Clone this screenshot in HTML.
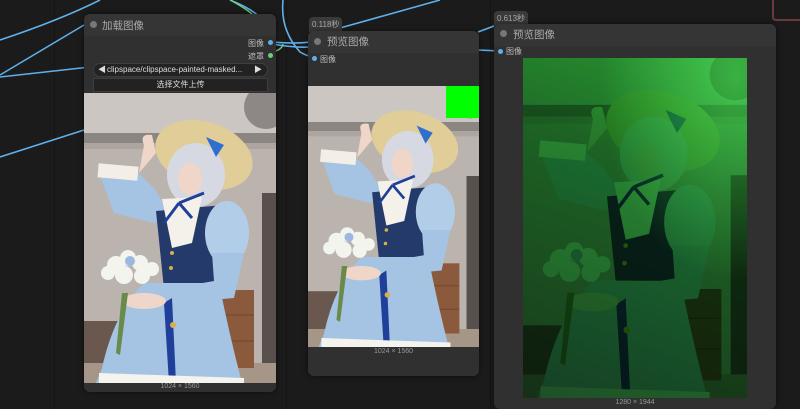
<!DOCTYPE html>
<html><head><meta charset="utf-8">
<style>
html,body{margin:0;padding:0;}
body{width:800px;height:409px;overflow:hidden;background:#1b1b1b;position:relative;font-family:"Liberation Sans","Noto Sans CJK SC",sans-serif;}
.grid{position:absolute;top:0;bottom:0;width:1px;background:#141414;}
.node{position:absolute;background:#303030;border-radius:6px;box-shadow:0 0 6px rgba(0,0,0,.5);}
.title{position:absolute;left:0;right:0;top:0;height:22px;background:#353535;border-radius:6px 6px 0 0;}
.tdot{position:absolute;width:7px;height:7px;border-radius:50%;background:#777;}
.ttext{position:absolute;color:#aaa;font-size:10.5px;}
.lbl{position:absolute;color:#bbb;font-size:8px;}
.dot{position:absolute;width:5px;height:5px;border-radius:50%;}
.badge{position:absolute;background:#3a3a3a;color:#aaa;font-size:8px;padding:2px 3px;border-radius:4px 4px 0 0;}
.cap{position:absolute;color:#999;font-size:7px;text-align:center;}
.img{position:absolute;overflow:hidden;}
.img svg{display:block;width:100%;height:100%;}
</style></head><body>
<div class="grid" style="left:54px"></div>
<div class="grid" style="left:286px"></div>
<div class="grid" style="left:490px"></div>
<div style="position:absolute;left:772px;top:-4px;width:40px;height:21px;border:2px solid #6a3a40;border-radius:4px;"></div>

<svg width="800" height="409" style="position:absolute;left:0;top:0">
<g fill="none" stroke="#5fb0ea" stroke-width="1.6">
<path d="M0 75 L84 25"/>
<path d="M0 77 L90 67"/>
<path d="M0 157 L84 130"/>
<path d="M0 40 Q60 20 100 0"/>
<path d="M230 0 Q255 10 262 20"/>
<path d="M283 0 Q280 30 300 52 Q310 58 318 57"/>
<path d="M272 42 Q295 44 310 42"/>
<path d="M272 44 Q295 48 310 47"/>
<path d="M340 28 L440 0"/>
<path d="M478 32 L494 26"/>
<path d="M478 50 L500 51"/>
</g>
<path d="M272 52 Q282 50 283 44" stroke="#6fcf7a" stroke-width="1.4" fill="none"/>
<path d="M230 0 Q245 8 252 14" stroke="#6fcf7a" stroke-width="1.4" fill="none"/>
<defs>
<symbol id="fig" viewBox="0 0 192 290" preserveAspectRatio="none">
<rect width="192" height="290" fill="#bbb4ae"/>
<rect width="192" height="40" fill="#cbc6c2"/>
<rect y="40" width="192" height="10" fill="#8c8682"/>
<rect y="50" width="192" height="6" fill="#ada6a0"/>
<circle cx="182" cy="14" r="22" fill="#8d8886"/>
<rect x="178" y="100" width="14" height="170" fill="#57504d"/>
<rect x="0" y="228" width="40" height="62" fill="#6a584e"/>
<rect x="0" y="270" width="192" height="20" fill="#a59688"/>
<rect x="134" y="197" width="36" height="78" fill="#8b5a3c"/>
<line x1="134" y1="222" x2="170" y2="222" stroke="#6e452c"/>
<line x1="134" y1="248" x2="170" y2="248" stroke="#6e452c"/>
<ellipse cx="120" cy="62" rx="50" ry="33" transform="rotate(18 120 62)" fill="#e0cd98"/>
<path d="M60 52 Q55 40 68 42 L72 60 L55 80 Z" fill="#efd6c8"/>
<path d="M15 80 L52 78 L70 95 L85 120 L70 130 L30 120 Z" fill="#a5c3e2"/>
<rect x="14" y="72" width="40" height="14" fill="#f4efe6" transform="rotate(5 34 79)"/>
<ellipse cx="112" cy="82" rx="29" ry="32" fill="#d6d9e2"/>
<ellipse cx="106" cy="86" rx="12" ry="16" fill="#efd6c8"/>
<path d="M122 44 L140 52 L132 64 Z" fill="#2f6fd0"/>
<path d="M72 118 L140 112 L130 192 L80 196 Z" fill="#243a6b"/>
<path d="M78 106 L118 104 L108 150 L88 155 Z" fill="#f4f1ea"/>
<path d="M95 110 L120 100 M95 110 L80 130 M95 110 L108 125" stroke="#1f3f9a" stroke-width="3" fill="none"/>
<ellipse cx="143" cy="140" rx="22" ry="32" fill="#b2cde8"/>
<path d="M128 160 L160 160 L150 205 L95 210 L90 195 L130 188 Z" fill="#a5c3e2"/>
<rect x="70" y="190" width="22" height="30" fill="#f3efe6"/>
<path d="M18 275 Q30 220 60 190 L135 190 Q145 240 158 290 L12 290 Z" fill="#a5c3e2"/>
<path d="M80 210 L85 290 L92 290 L88 205 Z" fill="#1f3f9a"/>
<path d="M15 280 L160 285 L160 290 L15 290 Z" fill="#f5f3ee"/>
<ellipse cx="60" cy="208" rx="22" ry="8" fill="#efd6c8"/>
<path d="M38 200 L32 260 L36 262 L44 200 Z" fill="#6a8a4a"/>
<g fill="#f3f4ee"><circle cx="32" cy="172" r="9"/><circle cx="44" cy="165" r="8"/><circle cx="56" cy="170" r="8"/><circle cx="40" cy="182" r="9"/><circle cx="58" cy="183" r="8"/><circle cx="24" cy="180" r="7"/><circle cx="68" cy="176" r="7"/></g>
<circle cx="46" cy="168" r="5" fill="#9ab8e0"/>
<circle cx="88" cy="160" r="2" fill="#d8b04a"/><circle cx="87" cy="175" r="2" fill="#d8b04a"/><circle cx="89" cy="232" r="3" fill="#d8b04a"/>
</symbol>
</defs>
</svg>

<!-- Node 1 -->
<div class="node" style="left:84px;top:14px;width:192px;height:378px;">
<div class="title"></div>
<div class="tdot" style="left:6px;top:7px"></div>
<div class="ttext" style="left:18px;top:4px">加载图像</div>
<div class="lbl" style="right:12px;top:24px">图像</div>
<div class="dot" style="right:3px;top:26px;background:#5fb0ea"></div>
<div class="lbl" style="right:12px;top:37px">遮罩</div>
<div class="dot" style="right:3px;top:39px;background:#6fcf7a"></div>
<div style="position:absolute;left:9px;top:49px;width:173px;height:12px;background:#222;border:1px solid #3e3e3e;border-radius:7px;color:#ddd;font-size:8px;line-height:12px;">
<span style="position:absolute;left:4px">◀</span><span style="position:absolute;left:13px">clipspace/clipspace-painted-masked...</span><span style="position:absolute;right:5px">▶</span></div>
<div style="position:absolute;left:9px;top:64px;width:173px;height:12px;background:#222;border:1px solid #3e3e3e;color:#ddd;font-size:8px;line-height:12px;text-align:center;">选择文件上传</div>
<div class="img" style="left:0;top:79px;width:192px;height:290px;"><svg><use href="#fig"/></svg></div>
<div class="cap" style="left:0;width:192px;top:369px">1024 × 1560</div>
</div>

<!-- Node 2 -->
<div class="badge" style="left:309px;top:17px">0.118秒</div>
<div class="node" style="left:308px;top:31px;width:171px;height:345px;">
<div class="title"></div>
<div class="tdot" style="left:6px;top:7px"></div>
<div class="ttext" style="left:19px;top:3px">预览图像</div>
<div class="dot" style="left:4px;top:25px;background:#5fb0ea"></div>
<div class="lbl" style="left:12px;top:23px">图像</div>
<div class="img" style="left:0;top:55px;width:171px;height:261px;"><svg><use href="#fig"/></svg>
<div style="position:absolute;right:0;top:0;width:33px;height:32px;background:#00ff00"></div></div>
<div class="cap" style="left:0;width:171px;top:317px">1024 × 1560</div>
</div>

<!-- Node 3 -->
<div class="badge" style="left:494px;top:11px">0.613秒</div>
<div class="node" style="left:494px;top:24px;width:282px;height:385px;">
<div class="title"></div>
<div class="tdot" style="left:6px;top:6px"></div>
<div class="ttext" style="left:19px;top:3px">预览图像</div>
<div class="dot" style="left:4px;top:25px;background:#5fb0ea"></div>
<div class="lbl" style="left:12px;top:22px">图像</div>
<div class="img" style="left:29px;top:34px;width:224px;height:340px;">
<svg style="filter:brightness(0.75)"><use href="#fig"/></svg>
<div style="position:absolute;inset:0;background:linear-gradient(200deg,#40ff50 0%,#34b845 35%,#2a6e36 100%);mix-blend-mode:multiply;"></div>
<div style="position:absolute;inset:0;background:radial-gradient(ellipse at 95% 5%,rgba(70,255,80,.5),rgba(0,0,0,0) 45%);mix-blend-mode:screen;"></div>
</div>
<div class="cap" style="left:0;width:282px;top:375px">1280 × 1944</div>
</div>
</body></html>
